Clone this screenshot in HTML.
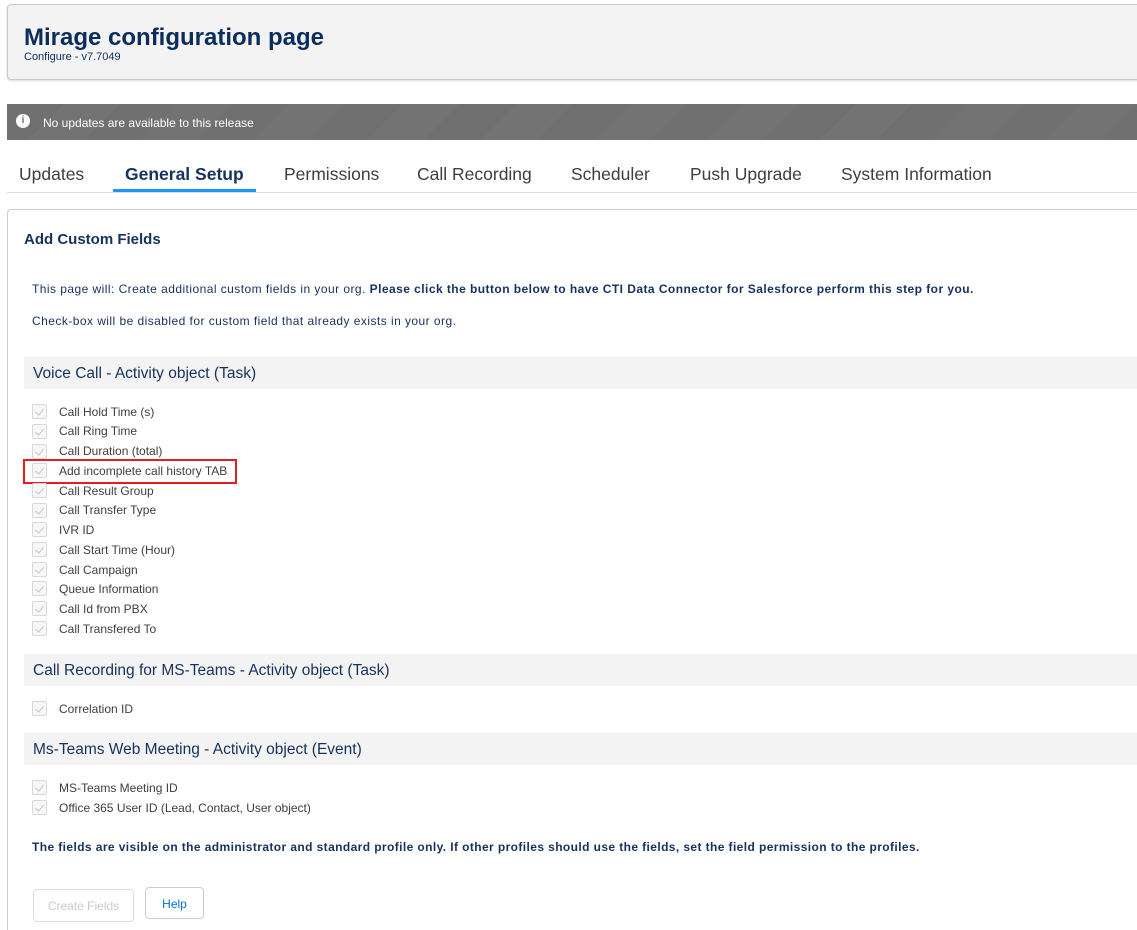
<!DOCTYPE html>
<html><head><meta charset="utf-8"><style>
*{margin:0;padding:0;box-sizing:border-box}
html,body{width:1137px;height:930px;overflow:hidden}
body{background:#fff;font-family:"Liberation Sans",sans-serif;position:relative;color:#16325c}
.a{position:absolute;white-space:nowrap}
.hdr{left:7px;top:4px;width:1140px;height:76px;background:#f3f3f3;border:1px solid #c9c9c9;border-radius:4px;box-shadow:0 1px 2px rgba(0,0,0,.15)}
.ban{left:7px;top:104px;width:1130px;height:36px;background:repeating-linear-gradient(135deg,#707070 0 40px,#737373 40px 80px)}
.tab{top:164px;font-size:17.5px;color:#3e3e3c}
.panel{left:7px;top:209px;width:1140px;height:760px;border:1px solid #ccc;border-radius:4px}
.sec{left:24px;width:1113px;height:32px;background:#f3f3f3;font-size:15.5px;color:#16325c;padding:8px 9px}
.cb{left:32px;width:15px;height:15px;border:1px solid #d8d8d8;border-radius:2px;background:#f7f7f7}
.cb:after{content:"";position:absolute;left:4px;top:2px;width:4px;height:7px;border:solid #c4c4c4;border-width:0 1.5px 1.5px 0;transform:rotate(40deg)}
.lb{left:59px;font-size:12px;color:#3e3e3c;margin-top:1px}
.t{font-size:12px;color:#16325c;letter-spacing:.45px}
</style></head><body>
<div class="a hdr"></div>
<div class="a" style="left:24px;top:24px;font-size:24px;font-weight:bold;color:#0b2d5c">Mirage configuration page</div>
<div class="a" style="left:24px;top:51px;font-size:11px;color:#0b2d5c">Configure - v7.7049</div>
<div class="a ban"></div>
<div class="a" style="left:16px;top:114px;width:14px;height:14px;border-radius:50%;background:#fff;color:#707070;font-size:10px;font-weight:bold;text-align:center;line-height:14px">i</div>
<div class="a" style="left:43px;top:116px;font-size:12px;color:#fff">No updates are available to this release</div>
<div class="a" style="left:7px;top:192px;width:1130px;height:1px;background:#ddd"></div>
<div class="a tab" style="left:19px">Updates</div>
<div class="a tab" style="left:125px;font-weight:bold;color:#16325c">General Setup</div>
<div class="a" style="left:113px;top:189px;width:143px;height:3px;background:#1b96ff"></div>
<div class="a tab" style="left:284px">Permissions</div>
<div class="a tab" style="left:417px">Call Recording</div>
<div class="a tab" style="left:571px">Scheduler</div>
<div class="a tab" style="left:690px">Push Upgrade</div>
<div class="a tab" style="left:841px">System Information</div>
<div class="a panel"></div>
<div class="a" style="left:24px;top:231px;font-size:15px;font-weight:bold;color:#16325c">Add Custom Fields</div>
<div class="a t" style="left:32px;top:282px">This page will: Create additional custom fields in your org. <b>Please click the button below to have CTI Data Connector for Salesforce perform this step for you.</b></div>
<div class="a t" style="left:32px;top:314px">Check-box will be disabled for custom field that already exists in your org.</div>
<div class="a sec" style="top:357px">Voice Call - Activity object (Task)</div>
<div class="a cb" style="top:404px"></div><div class="a lb" style="top:404px">Call Hold Time (s)</div>
<div class="a cb" style="top:424px"></div><div class="a lb" style="top:423px">Call Ring Time</div>
<div class="a cb" style="top:444px"></div><div class="a lb" style="top:443px">Call Duration (total)</div>
<div class="a cb" style="top:463px"></div><div class="a lb" style="top:463px">Add incomplete call history TAB</div>
<div class="a" style="left:23px;top:459px;width:214px;height:25px;border:2px solid #e02020"></div>
<div class="a cb" style="top:483px"></div><div class="a lb" style="top:483px">Call Result Group</div>
<div class="a cb" style="top:503px"></div><div class="a lb" style="top:502px">Call Transfer Type</div>
<div class="a cb" style="top:522px"></div><div class="a lb" style="top:522px">IVR ID</div>
<div class="a cb" style="top:542px"></div><div class="a lb" style="top:542px">Call Start Time (Hour)</div>
<div class="a cb" style="top:562px"></div><div class="a lb" style="top:562px">Call Campaign</div>
<div class="a cb" style="top:581px"></div><div class="a lb" style="top:581px">Queue Information</div>
<div class="a cb" style="top:601px"></div><div class="a lb" style="top:601px">Call Id from PBX</div>
<div class="a cb" style="top:621px"></div><div class="a lb" style="top:621px">Call Transfered To</div>
<div class="a sec" style="top:654px">Call Recording for MS-Teams - Activity object (Task)</div>
<div class="a cb" style="top:701px"></div><div class="a lb" style="top:701px">Correlation ID</div>
<div class="a sec" style="top:733px">Ms-Teams Web Meeting - Activity object (Event)</div>
<div class="a cb" style="top:780px"></div><div class="a lb" style="top:780px">MS-Teams Meeting ID</div>
<div class="a cb" style="top:800px"></div><div class="a lb" style="top:800px">Office 365 User ID (Lead, Contact, User object)</div>
<div class="a t" style="left:32px;top:840px;font-weight:bold;letter-spacing:.4px">The fields are visible on the administrator and standard profile only. If other profiles should use the fields, set the field permission to the profiles.</div>
<div class="a" style="left:33px;top:889px;width:101px;height:33px;border:1px solid #ddd;border-radius:4px;font-size:12px;color:#c9c9c9;text-align:center;line-height:33px">Create Fields</div>
<div class="a" style="left:145px;top:887px;width:59px;height:32px;border:1px solid #ccc;border-radius:4px;font-size:12px;color:#0070d2;text-align:center;line-height:32px">Help</div>
</body></html>
